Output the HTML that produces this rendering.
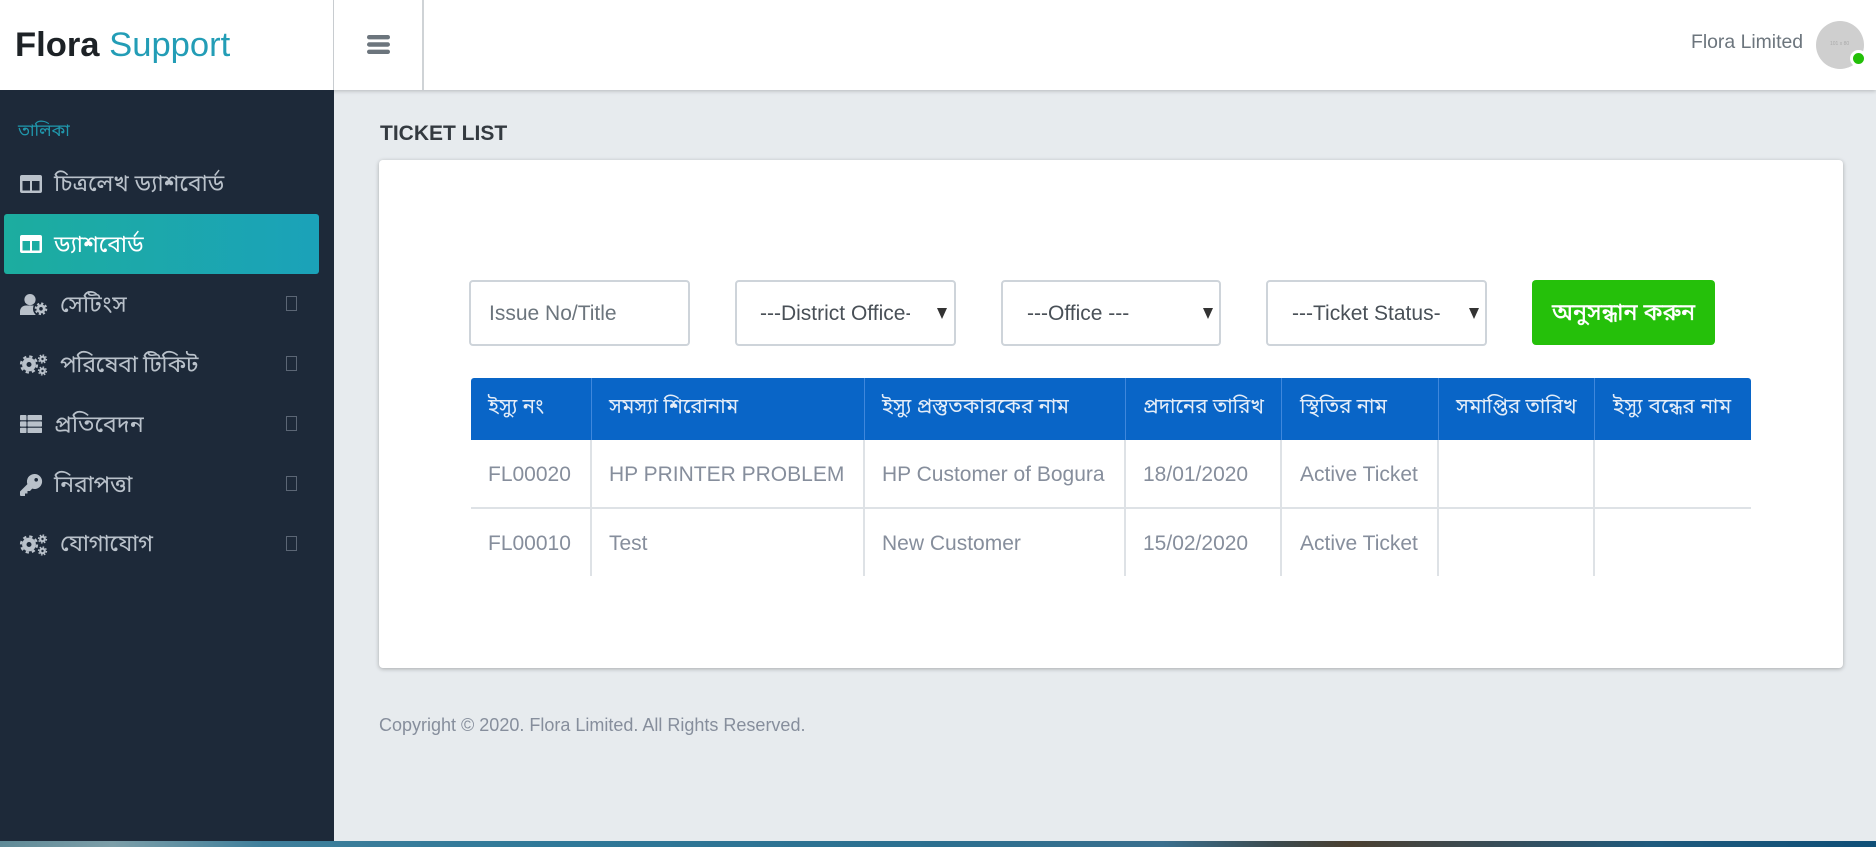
<!DOCTYPE html>
<html lang="bn"><head><meta charset="utf-8"><title>Flora Support</title>
<style>
html,body{margin:0;padding:0;width:1876px;height:847px;overflow:hidden;background:#e7ebee;font-family:"Liberation Sans",Arial,sans-serif}
*{box-sizing:border-box}
.a{position:absolute}
.t{position:absolute;white-space:nowrap;line-height:1}
.bn{font-family:"Noto Sans Bengali","Noto Serif Bengali","Lohit Bengali","Vrinda","FreeSerif","Liberation Sans",sans-serif}
.nav{color:#b9c1ca;font-size:23.200px}
.box{position:absolute;left:286px;width:11px;height:15px;border:1px solid #5b6675}
.f{position:absolute;top:280px;height:66px;background:#fff;border:2px solid #ced4da;border-radius:4px;font-size:21px;color:#495057}
.th{position:absolute;top:378px;height:62px;color:#e4edf8;font-size:20.500px;line-height:61px;white-space:nowrap}
.td{position:absolute;font-size:21px;color:#868e9c;white-space:nowrap;line-height:23px}
.vl{position:absolute;width:1px;top:378px;height:62px;background:#3f87dc}
.vg{position:absolute;width:2px;top:440px;height:136px;background:#dee2e6}
svg{position:absolute;overflow:visible}
</style></head><body>
<div class="a" style="left:0;top:0;width:1876px;height:90px;background:#fff;box-shadow:0 1px 4px rgba(0,0,0,.22)"></div>
<div class="a" style="left:333px;top:0;width:1px;height:90px;background:#c8ccd0"></div>
<div class="a" style="left:422px;top:0;width:2px;height:90px;background:#cfd3d6"></div>
<div class="t" style="left:15px;top:28px;font-size:34.600px;font-weight:bold;color:#1d2226">Flora <span style="font-weight:normal;color:#239db6">Support</span></div>
<svg style="left:367px;top:35px" width="23" height="19"><g fill="#6c757d"><rect width="23" height="4.400" rx="2.200"/><rect y="7.300" width="23" height="4.400" rx="2.200"/><rect y="14.600" width="23" height="4.400" rx="2.200"/></g></svg>
<div class="t" style="left:1691px;top:33px;font-size:19.400px;color:#6c757d">Flora Limited</div>
<div class="a" style="left:1816px;top:21px;width:48px;height:48px;border-radius:50%;background:#cfcfcf"></div>
<div class="t" style="left:1830px;top:42px;font-size:5px;color:#aaa">101 x 80</div>
<div class="a" style="left:1850px;top:50px;width:17px;height:17px;border-radius:50%;background:#23bf08;border:3px solid #fff"></div>

<div class="a" style="left:0;top:90px;width:334px;height:751px;background:#1d2939"></div>
<div class="t bn" style="left:18px;top:123px;font-size:17px;color:#2098ad">তালিকা</div>
<div class="a" style="left:4px;top:214px;width:315px;height:60px;border-radius:3px;background:linear-gradient(90deg,#1cad9f,#1ba2b9)"></div>

<svg style="left:20px;top:175px" width="22" height="18"><path fill="#b9c1ca" fill-rule="evenodd" d="M2 0h18a2 2 0 0 1 2 2v14a2 2 0 0 1-2 2H2a2 2 0 0 1-2-2V2a2 2 0 0 1 2-2zM2.500 6v9.500h7.500V6zM12 6v9.500h7.500V6z"/></svg>
<div class="t bn nav" style="left:54px;top:175px">চিত্রলেখ ড্যাশবোর্ড</div>
<svg style="left:20px;top:235px" width="22" height="18"><path fill="#fff" fill-rule="evenodd" d="M2 0h18a2 2 0 0 1 2 2v14a2 2 0 0 1-2 2H2a2 2 0 0 1-2-2V2a2 2 0 0 1 2-2zM2.500 6v9.500h7.500V6zM12 6v9.500h7.500V6z"/></svg>
<div class="t bn nav" style="left:54px;top:236px;color:#fff">ড্যাশবোর্ড</div>

<svg style="left:20px;top:294px" width="28" height="22"><g fill="#b9c1ca"><circle cx="10" cy="5.600" r="5.600"/><path d="M0 21v-3.500C0 14 2.500 11.500 6 11.500h8c3 0 5 2 5 5V21z"/></g><circle cx="21" cy="14.800" r="8" fill="#1d2939"/><circle cx="21" cy="14.800" r="3.200" fill="none" stroke="#b9c1ca" stroke-width="2.800"/><circle cx="21" cy="14.800" r="5.300" fill="none" stroke="#b9c1ca" stroke-width="2" stroke-dasharray="2.200 1.960"/></svg>
<div class="t bn nav" style="left:60px;top:296px;letter-spacing:.2px">সেটিংস</div>
<div class="box" style="top:296px"></div>

<svg style="left:20px;top:354px" width="28" height="22"><circle cx="9" cy="10.500" r="4.700" fill="none" stroke="#b9c1ca" stroke-width="4.400"/><circle cx="9" cy="10.500" r="8" fill="none" stroke="#b9c1ca" stroke-width="2.200" stroke-dasharray="3.300 2.980"/><circle cx="22.500" cy="5" r="2.300" fill="none" stroke="#b9c1ca" stroke-width="2.200"/><circle cx="22.500" cy="5" r="4" fill="none" stroke="#b9c1ca" stroke-width="1.300" stroke-dasharray="1.600 1.540"/><circle cx="22.500" cy="17" r="2.300" fill="none" stroke="#b9c1ca" stroke-width="2.200"/><circle cx="22.500" cy="17" r="4" fill="none" stroke="#b9c1ca" stroke-width="1.300" stroke-dasharray="1.600 1.540"/></svg>
<div class="t bn nav" style="left:60px;top:356px;letter-spacing:-.5px">পরিষেবা টিকিট</div>
<div class="box" style="top:356px"></div>

<svg style="left:20px;top:415px" width="22" height="18"><g fill="#b9c1ca"><rect width="6.500" height="5.300" rx=".8"/><rect x="7.500" width="14.500" height="5.300" rx=".8"/><rect y="6.350" width="6.500" height="5.300" rx=".8"/><rect x="7.500" y="6.350" width="14.500" height="5.300" rx=".8"/><rect y="12.700" width="6.500" height="5.300" rx=".8"/><rect x="7.500" y="12.700" width="14.500" height="5.300" rx=".8"/></g></svg>
<div class="t bn nav" style="left:54px;top:416px;letter-spacing:.1px">প্রতিবেদন</div>
<div class="box" style="top:416px"></div>

<svg style="left:20px;top:474px" width="22" height="22"><path fill="#b9c1ca" fill-rule="evenodd" d="M14.500 0a7.500 7.500 0 1 1-2.300 14.600L10 17H7.500v2.500H5V22H1a1 1 0 0 1-1-1v-3.500l7.400-7.400A7.500 7.500 0 0 1 14.500 0zm1.700 4a1.800 1.800 0 1 0 0 3.600 1.800 1.800 0 0 0 0-3.600z"/></svg>
<div class="t bn nav" style="left:54px;top:476px;letter-spacing:-.3px">নিরাপত্তা</div>
<div class="box" style="top:476px"></div>

<svg style="left:20px;top:534px" width="28" height="22"><circle cx="9" cy="10.500" r="4.700" fill="none" stroke="#b9c1ca" stroke-width="4.400"/><circle cx="9" cy="10.500" r="8" fill="none" stroke="#b9c1ca" stroke-width="2.200" stroke-dasharray="3.300 2.980"/><circle cx="22.500" cy="5" r="2.300" fill="none" stroke="#b9c1ca" stroke-width="2.200"/><circle cx="22.500" cy="5" r="4" fill="none" stroke="#b9c1ca" stroke-width="1.300" stroke-dasharray="1.600 1.540"/><circle cx="22.500" cy="17" r="2.300" fill="none" stroke="#b9c1ca" stroke-width="2.200"/><circle cx="22.500" cy="17" r="4" fill="none" stroke="#b9c1ca" stroke-width="1.300" stroke-dasharray="1.600 1.540"/></svg>
<div class="t bn nav" style="left:60px;top:535px;letter-spacing:-.4px">যোগাযোগ</div>
<div class="box" style="top:536px"></div>

<div class="t" style="left:380px;top:123px;font-size:21px;font-weight:bold;color:#343a40">TICKET LIST</div>
<div class="a" style="left:379px;top:160px;width:1464px;height:508px;background:#fff;border-radius:4px;box-shadow:0 1px 4px rgba(0,0,0,.28)"></div>

<div class="f" style="left:469px;width:221px"><span class="t" style="left:18px;top:21px;color:#6c757d">Issue No/Title</span></div>
<div class="f" style="left:735px;width:221px;overflow:hidden"><span class="t" style="left:23px;top:21px;width:150px;overflow:hidden">---District Office---</span><svg style="left:200px;top:26px" width="10" height="11"><path d="M0 0h10L5 11z" fill="#333"/></svg></div>
<div class="f" style="left:1001px;width:220px"><span class="t" style="left:24px;top:21px">---Office ---</span><svg style="left:200px;top:26px" width="10" height="11"><path d="M0 0h10L5 11z" fill="#333"/></svg></div>
<div class="f" style="left:1266px;width:221px;overflow:hidden"><span class="t" style="left:24px;top:21px;width:149px;overflow:hidden">---Ticket Status-</span><svg style="left:201px;top:26px" width="10" height="11"><path d="M0 0h10L5 11z" fill="#333"/></svg></div>
<div class="a" style="left:1532px;top:280px;width:183px;height:65px;background:#25c00a;border-radius:4px"></div>
<div class="t bn" style="left:1552px;top:303px;font-size:23.400px;-webkit-text-stroke:.4px #fff;color:#fff">অনুসন্ধান করুন</div>

<div class="a" style="left:471px;top:378px;width:1280px;height:62px;background:#0965c7;border-radius:3px 3px 0 0"></div>
<div class="vl" style="left:591px"></div><div class="vl" style="left:864px"></div><div class="vl" style="left:1125px"></div><div class="vl" style="left:1281px"></div><div class="vl" style="left:1438px"></div><div class="vl" style="left:1594px"></div>
<div class="vg" style="left:590px"></div><div class="vg" style="left:863px"></div><div class="vg" style="left:1124px"></div><div class="vg" style="left:1280px"></div><div class="vg" style="left:1437px"></div><div class="vg" style="left:1593px"></div>
<div class="a" style="left:471px;top:507px;width:1280px;height:2px;background:#dee2e6"></div>

<div class="th bn" style="left:488px">ইস্যু নং</div>
<div class="th bn" style="left:609px">সমস্যা শিরোনাম</div>
<div class="th bn" style="left:882px">ইস্যু প্রস্তুতকারকের নাম</div>
<div class="th bn" style="left:1143px">প্রদানের তারিখ</div>
<div class="th bn" style="left:1300px">স্থিতির নাম</div>
<div class="th bn" style="left:1456px">সমাপ্তির তারিখ</div>
<div class="th bn" style="left:1613px;letter-spacing:.3px">ইস্যু বন্ধের নাম</div>

<div class="td" style="left:488px;top:463px">FL00020</div>
<div class="td" style="left:609px;top:463px">HP PRINTER PROBLEM</div>
<div class="td" style="left:882px;top:463px">HP Customer of Bogura</div>
<div class="td" style="left:1143px;top:463px">18/01/2020</div>
<div class="td" style="left:1300px;top:463px">Active Ticket</div>
<div class="td" style="left:488px;top:532px">FL00010</div>
<div class="td" style="left:609px;top:532px">Test</div>
<div class="td" style="left:882px;top:532px">New Customer</div>
<div class="td" style="left:1143px;top:532px">15/02/2020</div>
<div class="td" style="left:1300px;top:532px">Active Ticket</div>

<div class="t" style="left:379px;top:716px;font-size:18px;color:#868e9c">Copyright © 2020. Flora Limited. All Rights Reserved.</div>

<div class="a" style="left:0;top:841px;width:1876px;height:6px;background:linear-gradient(90deg,#5f8a97 0,#7c9ea8 6%,#3f7f9b 14%,#2f7898 30%,#2c6f8f 50%,#3a6f8e 62%,#3c4a4e 68%,#4a3f30 72%,#3d4a50 78%,#1f5a7d 88%,#0f4f77 100%)"></div>
</body></html>
